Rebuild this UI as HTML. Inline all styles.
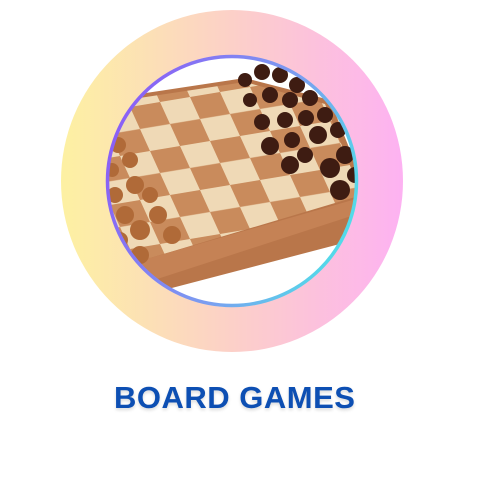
<!DOCTYPE html>
<html><head><style>
html,body{margin:0;padding:0;background:#fff;width:500px;height:500px;overflow:hidden;font-family:"Liberation Sans",sans-serif}
.t{position:absolute;left:114px;width:240px;top:380px;text-align:center;font-weight:bold;font-size:31px;letter-spacing:0.5px;color:#0d4fb3;text-shadow:0 2px 3px rgba(0,0,0,0.15);white-space:nowrap}
</style></head><body>
<svg width="500" height="500" style="position:absolute;left:0;top:0">
<defs>
<linearGradient id="og" x1="0" x2="1" y1="0" y2="0">
<stop offset="0" stop-color="#fdf1a2"/><stop offset="0.5" stop-color="#fcd0c8"/><stop offset="1" stop-color="#fdb2f2"/>
</linearGradient>
<linearGradient id="bg" x1="0" x2="1" y1="0.3" y2="0.7">
<stop offset="0" stop-color="#8b5cf6"/><stop offset="0.6" stop-color="#7aa0f0"/><stop offset="1" stop-color="#4fe0e8"/>
</linearGradient>
<clipPath id="c"><circle cx="232" cy="181" r="124"/></clipPath>
<pattern id="ck" width="2" height="2" patternUnits="userSpaceOnUse" patternTransform="matrix(30,-5,10,22,100,112)">
<rect width="2" height="2" fill="#c98b5c"/>
<rect width="1" height="1" fill="#efd9b6"/><rect x="1" y="1" width="1" height="1" fill="#efd9b6"/>
</pattern>
</defs>
<circle cx="232" cy="181" r="171" fill="url(#og)"/>
<circle cx="232" cy="181" r="126" fill="#fff"/>
<g clip-path="url(#c)">
<polygon points="100,100 245,78 330,100 370,200 355,240 145,295 100,285" fill="#b9764a"/>
<polygon points="100,104 245,82 325,104 362,195 150,258 100,250" fill="url(#ck)"/>
<polygon points="100,250 150,258 370,195 370,210 148,282 100,272" fill="#c58255"/>
<g fill="#3e1c12">
<circle cx="245" cy="80" r="7"/><circle cx="262" cy="72" r="8"/><circle cx="280" cy="75" r="8"/><circle cx="297" cy="85" r="8"/>
<circle cx="250" cy="100" r="7"/><circle cx="270" cy="95" r="8"/><circle cx="290" cy="100" r="8"/><circle cx="310" cy="98" r="8"/>
<circle cx="262" cy="122" r="8"/><circle cx="285" cy="120" r="8"/><circle cx="306" cy="118" r="8"/><circle cx="325" cy="115" r="8"/>
<circle cx="270" cy="146" r="9"/><circle cx="292" cy="140" r="8"/><circle cx="318" cy="135" r="9"/><circle cx="338" cy="130" r="8"/>
<circle cx="290" cy="165" r="9"/><circle cx="305" cy="155" r="8"/><circle cx="330" cy="168" r="10"/><circle cx="345" cy="155" r="9"/>
<circle cx="340" cy="190" r="10"/><circle cx="355" cy="175" r="8"/>
</g>
<g fill="#b06a38">
<circle cx="118" cy="145" r="8"/><circle cx="130" cy="160" r="8"/><circle cx="112" cy="170" r="7"/>
<circle cx="135" cy="185" r="9"/><circle cx="115" cy="195" r="8"/><circle cx="150" cy="195" r="8"/>
<circle cx="125" cy="215" r="9"/><circle cx="158" cy="215" r="9"/><circle cx="140" cy="230" r="10"/>
<circle cx="172" cy="235" r="9"/><circle cx="140" cy="255" r="9"/><circle cx="120" cy="240" r="8"/>
</g>
</g>
<circle cx="232" cy="181" r="124.5" fill="none" stroke="url(#bg)" stroke-width="3.5"/>
</svg>
<div class="t">BOARD GAMES</div>
</body></html>
